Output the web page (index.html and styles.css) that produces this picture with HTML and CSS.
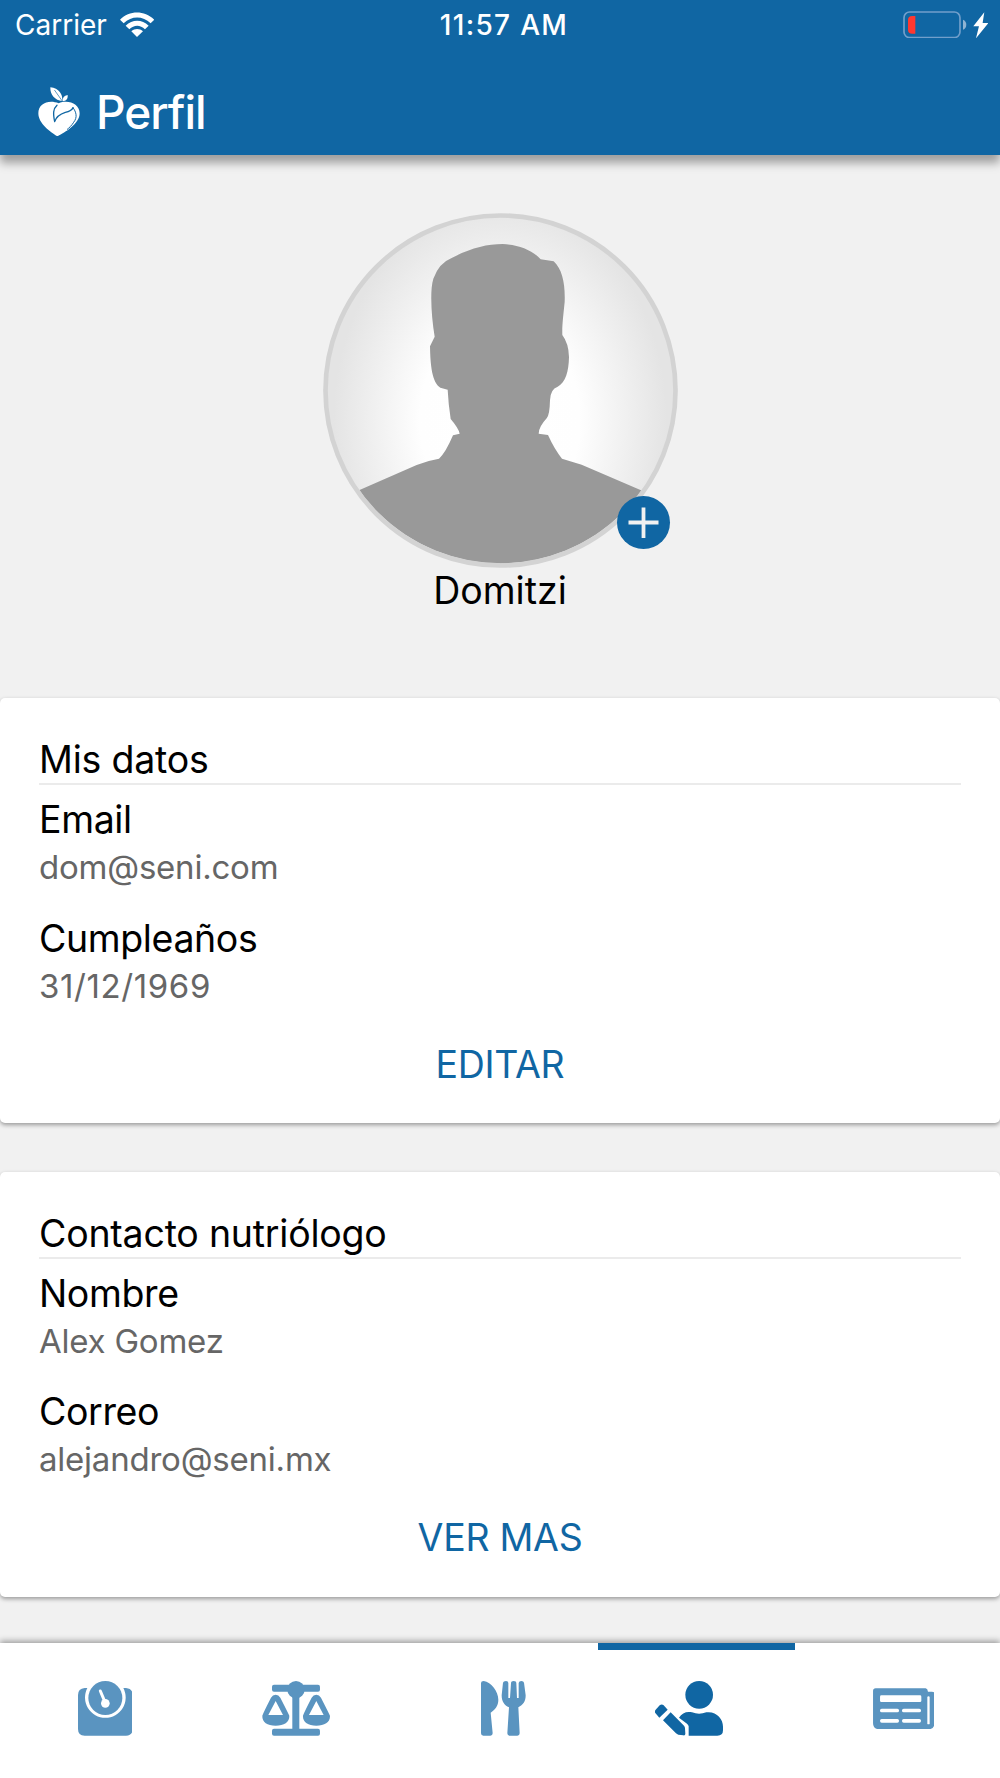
FILE: index.html
```html
<!DOCTYPE html>
<html lang="es">
<head>
<meta charset="utf-8">
<title>Perfil</title>
<link rel="stylesheet" href="styles.css">
</head>
<body>
<div class="screen">
  <header class="header">
    <div class="status">
      <div class="status-left">
        <span class="carrier">Carrier</span>
        <svg class="wifi" viewBox="362 35 103 75" width="34.3" height="25"><g fill="#fff"><path d="M362 58C390 29 436 29 465 58L454 69C430 46 397 46 373 69Z"/><path d="M379 76C399 56 428 56 448 76L437 87C423 73 404 73 390 87Z"/><path d="M396 93C406 84 421 84 431 93L413 110Z"/></g></svg>
      </div>
      <span class="clock">11:57 AM</span>
      <div class="status-right">
        <svg viewBox="129 31 256 83" width="85.3" height="27.7"><rect x="132" y="34" width="168" height="77" rx="17" fill="none" stroke="#719fcb" stroke-width="5"/><path d="M166 46V99H157Q144 99 144 87V58Q144 46 157 46Z" fill="#ff3830"/><path d="M309 57Q319 61 319 72T309 87Z" fill="#8fb4d3"/><path d="M373 35L340 77H357L348 113L385 67H368Z" fill="#fff"/></svg>
      </div>
    </div>
    <div class="title-row">
      <svg class="logo" viewBox="115 260 126 148" width="42" height="49.3"><path fill="#fff" d="M173 408C155 397 116 371 116 339C116 309 148 297 177 309C205 297 240 310 240 339C240 372 192 399 173 408Z"/><path fill="#fff" d="M152 261C178 264 190 282 188 302C166 301 151 283 152 261ZM204 284C205 296 200 302 189 303C188 292 193 286 204 284Z"/><g fill="none" stroke="#1066a3" stroke-linecap="round" stroke-linejoin="round"><path stroke-width="2" d="M165 270L187 301"/><path stroke-width="4" d="M172 315C160 326 160 340 165 364C171 345 184 340 197 336C210 333 217 329 220 322"/><path stroke-width="3" d="M220 322C230 335 234 351 222 366C216 376 208 383 203 387"/></g></svg>
      <h1 class="title">Perfil</h1>
    </div>
  </header>

  <main class="content">
    <section class="profile">
      <div class="avatar">
        <svg viewBox="69 68 1065 1065" width="355" height="355">
          <defs>
            <radialGradient id="glow" gradientUnits="userSpaceOnUse" cx="0" cy="0" r="1" gradientTransform="translate(600 690) scale(500 660)"><stop offset="0" stop-color="#fff"/><stop offset=".48" stop-color="#fefefe"/><stop offset="1" stop-color="#e4e4e4"/></radialGradient>
            <clipPath id="round"><circle cx="601.5" cy="600.5" r="519"/></clipPath>
          </defs>
          <circle cx="601.5" cy="600.5" r="525" fill="url(#glow)"/>
          <path clip-path="url(#round)" fill="#999" d="M177 900L350 824Q385 810 417 805Q436 789 459 735L479 730Q476 714 452 686Q445 640 443 598L421 592C396 577 391 525 390 468L404 439C394 380 389 300 400 265Q417 218 455 203C510 174 560 161 608 161C655 163 696 178 722 207L761 213C787 237 796 280 794 335C790 375 786 405 787 434Q806 459 807 500C806 545 797 576 773 589Q751 596 750 630Q749 675 740 684Q716 710 716 730L744 734Q763 776 786 805L845 823L1023 900V1140H177Z"/>
          <circle cx="601.5" cy="600.5" r="525" fill="none" stroke="#d3d3d3" stroke-width="14"/>
        </svg>
        <button class="add" aria-label="Agregar foto"><svg viewBox="0 0 53 53" width="53" height="53"><path d="M11.5 26.5H41.5M26.5 11.5V42" stroke="#f1f1f1" stroke-width="3.8"/></svg></button>
      </div>
      <p class="name">Domitzi</p>
    </section>

    <section class="card">
      <h2 class="card-title">Mis datos</h2>
      <dl class="fields">
        <dt>Email</dt><dd>dom@seni.com</dd>
        <dt>Cumpleaños</dt><dd class="date">31/12/1969</dd>
      </dl>
      <button class="action">EDITAR</button>
    </section>

    <section class="card">
      <h2 class="card-title">Contacto nutriólogo</h2>
      <dl class="fields">
        <dt>Nombre</dt><dd>Alex Gomez</dd>
        <dt>Correo</dt><dd>alejandro@seni.mx</dd>
      </dl>
      <button class="action">VER MAS</button>
    </section>
  </main>

  <nav class="tabs">
    <a class="tab tab-weight"><svg viewBox="113 123 164 164" width="54.7" height="54.7"><path fill="#5a94c0" d="M141 144A61 61 0 1 0 249 144H257Q277 146 277 165V267Q277 287 257 287H133Q113 287 113 267V165Q113 146 133 144Z"/><circle cx="195" cy="174" r="51" fill="#5a94c0"/><path d="M180 153L193 184" stroke="#fff" stroke-width="9" stroke-linecap="round"/><circle cx="195" cy="190" r="13" fill="#fff"/></svg></a>
    <a class="tab tab-balance"><svg viewBox="665 123 205 164" width="68.3" height="54.7"><g fill="#5a94c0"><rect x="695" y="134" width="144" height="21" rx="6"/><rect x="695" y="266" width="144" height="21" rx="6"/><rect x="756" y="150" width="21" height="125"/><circle cx="767" cy="149" r="26"/><path id="pan" fill-rule="evenodd" d="M666 227Q668 220 692 173Q697 164 706 164T720 173Q744 220 747 227C748 247 731 257 706 257S665 247 666 227ZM706 183L684 225H728Z"/><use href="#pan" x="122"/></g></svg></a>
    <a class="tab tab-food"><svg viewBox="123 153 135 164" width="45" height="54.7"><g fill="#5a94c0"><path d="M123 159Q123 153 131 153C154 156 175 185 175 209C175 227 165 239 152 248L158 310Q158 317 151 317H130Q123 317 123 310Z"/><path d="M189 158Q190 153 198 153Q205 153 205 159V204H210L213 160Q213 153 221 153T229 160L231 204H236V159Q237 153 244 153Q251 153 252 158L257 196C257 215 249 225 235 232L239 310Q239 317 232 317H209Q202 317 202 310L207 232C193 226 185 214 185 196Z"/></g></svg></a>
    <a class="tab tab-profile active"><svg viewBox="645 153 204 164" width="68" height="54.7"><g fill="#1066a3"><circle cx="777.5" cy="194.5" r="41.5"/><path d="M659 226Q665 221 671 226L683 239L658 263L646 249Q643 244 647 239Z"/><path d="M692 247L732 287Q735 290 735 295L736 311Q736 317 730 316L715 314Q711 313 708 310L669 271Z"/><path d="M717 263C726 249 740 243 756 247Q777 255 799 247C829 243 849 266 849 290V301Q849 317 832 317H746V289Q745 284 741 281Z"/></g></svg></a>
    <a class="tab tab-news"><svg viewBox="277 173 185 124" width="61.7" height="41.3"><path fill="#5a94c0" d="M285 174H435Q441 175 442 184H454Q462 184 462 192V279Q460 297 443 297H295Q277 296 277 279V182Q277 174 285 174Z"/><g fill="#fff"><rect x="298" y="195" width="124" height="20" rx="4"/><rect x="298" y="235" width="57" height="11" rx="5"/><rect x="364" y="235" width="57" height="11" rx="5"/><rect x="298" y="266" width="57" height="11" rx="5"/><rect x="364" y="266" width="57" height="11" rx="5"/><rect x="440" y="198" width="7" height="84" rx="3.5"/></g></svg></a>
  </nav>
</div>
</body>
</html>
```
FILE: styles.css
```css
* { box-sizing: border-box; }
body, h1, h2, p, dl, dd { margin: 0; }
body { background: #f1f1f1; font-family: Inter, "Liberation Sans", sans-serif; color: #000; }
button { border: 0; padding: 0; background: none; font: inherit; }
svg { display: block; }

.screen { width: 1000px; height: 1778px; display: flex; flex-direction: column; overflow: hidden; }

.header { height: 154.5px; flex: none; background: #1066a3; color: #fff; box-shadow: 0 8px 9px rgba(0, 0, 0, .34); }
.status { height: 50px; padding: 0 12px 0 15px; display: grid; grid-template-columns: 1fr auto 1fr; align-items: center; }
.status-left { display: flex; align-items: center; gap: 13px; }
.status-right { display: flex; justify-content: flex-end; padding-bottom: 1px; }
.wifi { margin-bottom: 2px; }
.carrier, .clock { font-size: 28px; line-height: 49px; padding-top: 1px; }
.clock { font-weight: 500; letter-spacing: 1.3px; padding-left: 5px; }
.title-row { display: flex; align-items: center; gap: 16px; padding: 36.5px 0 0 38px; }
.title { font-size: 46px; font-weight: 500; line-height: 50px; letter-spacing: -1px; }

.content { flex: 1; min-height: 0; }
.profile { height: 543.5px; padding-top: 58px; display: flex; flex-direction: column; align-items: center; }
.avatar { position: relative; width: 355px; height: 355px; }
.add { position: absolute; right: 8px; bottom: 18.5px; width: 53px; height: 53px; border-radius: 50%; background: #1066a3; }
.name { font-size: 37.5px; line-height: 46px; }

.card { height: 425px; padding: 38px 39px 0; margin-bottom: 48.5px; display: flex; flex-direction: column; background: #fff; border-radius: 5px; box-shadow: 0 2px 4px rgba(0, 0, 0, .36); }
.card-title { font-size: 37.5px; font-weight: 400; line-height: 47px; letter-spacing: -.22px; border-bottom: 2px solid #ebebeb; margin-bottom: 11px; }
.fields dt { font-size: 37.5px; line-height: 47px; letter-spacing: -.38px; }
.fields dd { font-size: 33px; line-height: 49px; letter-spacing: -.22px; color: #666; }
.fields .date { letter-spacing: .6px; }
.fields dd + dt { margin-top: 22.5px; }
.action { margin-top: 30px; font-size: 37.5px; line-height: 47px; letter-spacing: -.3px; color: #1066a3; align-self: center; }

.tabs { height: 135.5px; flex: none; display: grid; grid-template-columns: 199px 199px 200px 197px 205px; background: #fff; box-shadow: 0 -2px 6px rgba(0, 0, 0, .36); }
.tab { position: relative; padding-top: 38.5px; }
.tab-weight { padding-left: 77.7px; }
.tab-balance { padding-left: 62.7px; }
.tab-food { padding-left: 83px; }
.tab-profile { padding-left: 57px; }
.tab-news { padding: 45px 0 0 77.6px; }
.active::before { content: ""; position: absolute; left: 0; right: 0; top: 0; height: 7px; background: #1066a3; }
```
